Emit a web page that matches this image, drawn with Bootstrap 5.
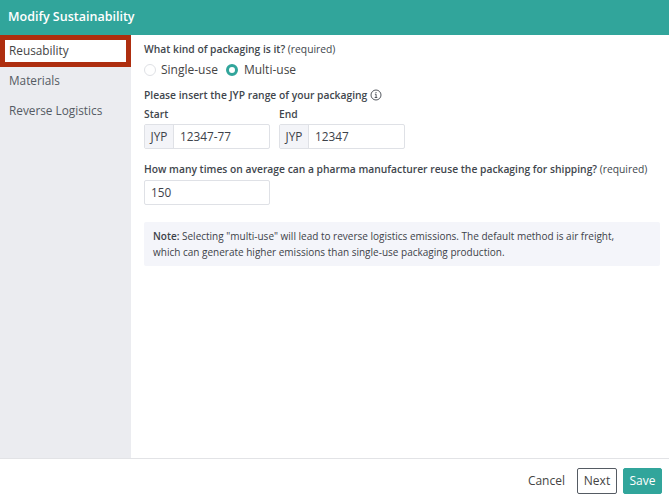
<!DOCTYPE html>
<html lang="en">
<head>
  <meta charset="UTF-8" />
  <meta name="viewport" content="width=device-width, initial-scale=1.0"/>
  <title>Modify Sustainability</title>
  <link href="https://cdn.jsdelivr.net/npm/bootstrap@5.3.3/dist/css/bootstrap.min.css" rel="stylesheet">
  <style>
    html, body {
      height: 100%;
    }

    body {
      font-family: "Open Sans", "Liberation Sans", sans-serif;
      color: #3d4249;
      background-color: #fff;
      font-size: 11px;
      overflow: hidden;
    }

    .modal-shell {
      height: 501px;
    }

    .modal-top {
      background-color: #31a59b;
      color: #fff;
      height: 35px;
      padding: 0 8px;
      font-size: 12.5px;
      font-weight: 600;
    }

    .side-menu {
      width: 131px;
      flex-shrink: 0;
      background-color: #ebecf0;
      font-size: 11.8px;
    }

    .side-item {
      height: 30px;
      padding-left: 9px;
      color: #555b63;
    }

    .side-item.current {
      height: 32px;
      margin-bottom: -1px;
      padding-left: 4px;
      background-color: #fff;
      border: 5px solid #ae2e0f;
      color: #444;
    }

    .form-pane {
      padding: 7px 9px 0 13px;
      min-width: 0;
    }

    .field-title {
      font-weight: 600;
      font-size: 10.3px;
      line-height: 14px;
      color: #41464d;
    }

    .field-title .hint {
      font-weight: 400;
      font-size: 10.3px;
    }

    .choice-row {
      height: 18px;
      margin-top: 5px;
      font-size: 12px;
      color: #444;
    }

    .choice-dot {
      width: 12px;
      height: 12px;
      margin-right: 5px;
      border-radius: 50%;
      border: 1px solid #dfe1e5;
      background: #fff;
    }

    .choice-dot.on {
      border: 3.5px solid #31a59b;
      margin-left: 8px;
      margin-right: 6px;
    }

    .range-title {
      margin-top: 9px;
    }

    .range-title svg {
      margin-left: 3px;
    }

    .range-row {
      margin-top: 5px;
      gap: 9px;
    }

    .start-label {
      margin-bottom: 3px;
    }

    .range-box {
      width: 126px;
      height: 25px;
      border: 1px solid #dfe1e6;
      border-radius: 2px;
      font-size: 11.8px;
    }

    .range-box .prefix {
      width: 29px;
      background-color: #f3f4f8;
      border-right: 1px solid #dfe1e6;
    }

    .range-box .entry {
      padding-left: 6px;
    }

    .reuse-title {
      margin-top: 13px;
    }

    .reuse-box {
      margin-top: 4px;
      padding-left: 6px;
    }

    .note-box {
      margin-top: 17px;
      background-color: #f4f5fa;
      padding: 6px 30px 6px 9px;
      font-size: 10px;
      line-height: 16px;
      border-radius: 2px;
    }

    .modal-bottom {
      height: 43px;
      border-top: 1px solid #e2e3e6;
      padding: 9px 7px 0 0;
      font-size: 12px;
    }

    .act-btn {
      height: 26px;
      width: 39px;
      border-radius: 2px;
      font-size: 12px;
      padding: 0;
    }

    .act-cancel {
      width: auto;
      margin-right: 12px;
      color: #444;
    }

    .act-next {
      width: 40px;
      border: 1px solid #555b63;
      color: #444;
      background: #fff;
    }

    .act-save {
      margin-left: 6px;
      border: 1px solid #31a59b;
      background: #31a59b;
      color: #fff;
    }
  </style>
</head>
<body>
  <div class="modal-shell d-flex flex-column">
    <div class="modal-top d-flex align-items-center">Modify Sustainability</div>

    <div class="d-flex flex-grow-1">
      <div class="side-menu">
        <div class="side-item current d-flex align-items-center">Reusability</div>
        <div class="side-item d-flex align-items-center">Materials</div>
        <div class="side-item d-flex align-items-center">Reverse Logistics</div>
      </div>

      <div class="form-pane flex-grow-1">
        <div class="field-title">What kind of packaging is it? <span class="hint">(required)</span></div>
        <div class="d-flex align-items-center choice-row">
          <span class="choice-dot"></span><span>Single-use</span>
          <span class="choice-dot on"></span><span>Multi-use</span>
        </div>

        <div class="field-title range-title d-flex align-items-center">
          Please insert the JYP range of your packaging
          <svg width="12" height="12" viewBox="0 0 12 12" fill="none" stroke="#41464d">
            <circle cx="6" cy="6" r="5" stroke-width="0.9"/>
            <path d="M4.9 5.2h1.2v3.2M4.7 8.5h2.6M6 3v1.1" stroke-width="0.9"/>
          </svg>
        </div>
        <div class="d-flex range-row">
          <div>
            <div class="field-title start-label">Start</div>
            <div class="range-box d-flex">
              <span class="prefix d-flex align-items-center justify-content-center">JYP</span>
              <span class="entry d-flex align-items-center">12347-77</span>
            </div>
          </div>
          <div>
            <div class="field-title start-label">End</div>
            <div class="range-box d-flex">
              <span class="prefix d-flex align-items-center justify-content-center">JYP</span>
              <span class="entry d-flex align-items-center">12347</span>
            </div>
          </div>
        </div>

        <div class="field-title reuse-title">How many times on average can a pharma manufacturer reuse the packaging for shipping? <span class="hint">(required)</span></div>
        <div class="range-box reuse-box d-flex align-items-center">150</div>

        <div class="note-box"><strong class="fw-semibold">Note:</strong> Selecting "multi-use" will lead to reverse logistics emissions. The default method is air freight, which can generate higher emissions than single-use packaging production.</div>
      </div>
    </div>

    <div class="modal-bottom d-flex justify-content-end align-items-start">
      <button class="btn act-btn act-cancel border-0">Cancel</button>
      <button class="btn act-btn act-next">Next</button>
      <button class="btn act-btn act-save">Save</button>
    </div>
  </div>
  <script src="https://cdn.jsdelivr.net/npm/bootstrap@5.3.3/dist/js/bootstrap.bundle.min.js"></script>
</body>
</html>
